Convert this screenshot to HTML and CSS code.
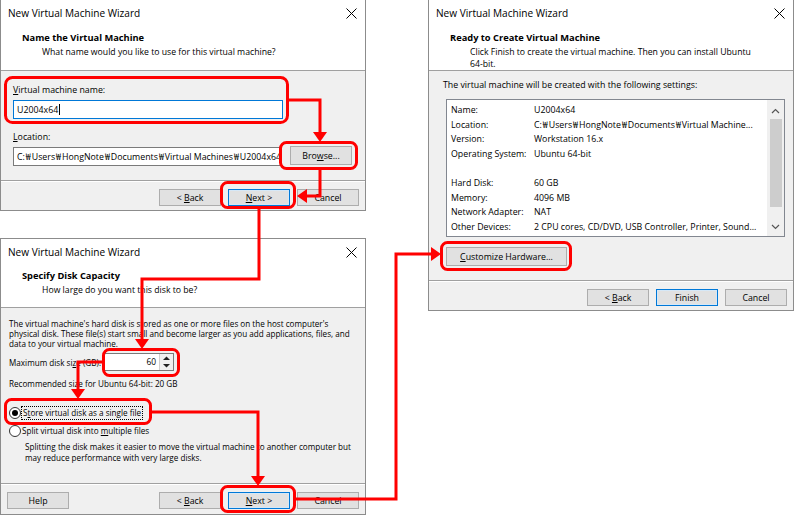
FILE: index.html
```html
<!DOCTYPE html>
<html lang="en">
<head>
    <meta charset="UTF-8">
    <title>New Virtual Machine Wizard</title>
    <link rel="stylesheet" href="styles.css">
</head>
<body>
    <div class="desk">
        <!-- step 1: name -->
        <div class="win win-name">
            <div class="titlebar">
                <span>New Virtual Machine Wizard</span>
                <svg class="close" width="11" height="11" viewBox="0 0 11 11"><path d="M0.5 0.5L10.5 10.5M10.5 0.5L0.5 10.5" stroke="#000" stroke-width="1"/></svg>
            </div>
            <div class="head">
                <div class="head-title">Name the Virtual Machine</div>
                <div class="head-sub">What name would you like to use for this virtual machine?</div>
            </div>
            <div class="body body-name">
                <div class="label"><u>V</u>irtual machine name:</div>
                <div class="field focused">U2004x64<span class="caret"></span></div>
                <div class="label label-loc"><u>L</u>ocation:</div>
                <div class="loc-row">
                    <div class="field">C:<span class="won">₩</span>Users<span class="won">₩</span>HongNote<span class="won">₩</span>Documents<span class="won">₩</span>Virtual Machines<span class="won">₩</span>U2004x64</div>
                    <div class="btn browse">Bro<u>w</u>se...</div>
                </div>
            </div>
            <div class="foot">
                <div class="btn"><span>&lt; <u>B</u>ack</span></div>
                <div class="btn default"><span><u>N</u>ext &gt;</span></div>
                <div class="btn">Cancel</div>
            </div>
        </div>

        <!-- step 2: disk -->
        <div class="win win-disk">
            <div class="titlebar">
                <span>New Virtual Machine Wizard</span>
                <svg class="close" width="11" height="11" viewBox="0 0 11 11"><path d="M0.5 0.5L10.5 10.5M10.5 0.5L0.5 10.5" stroke="#000" stroke-width="1"/></svg>
            </div>
            <div class="head head-short">
                <div class="head-title">Specify Disk Capacity</div>
                <div class="head-sub">How large do you want this disk to be?</div>
            </div>
            <div class="body body-disk">
                <p class="note">The virtual machine's hard disk is stored as one or more files on the host computer's<br>physical disk. These file(s) start small and become larger as you add applications, files, and<br>data to your virtual machine.</p>
                <div class="size-row">
                    <span>Maximum disk si<u>z</u>e (GB):</span>
                    <div class="spin">
                        <div class="spin-val">60</div>
                        <div class="spin-btns">
                            <svg width="9" height="6" viewBox="0 0 9 6"><path d="M1 5L4.5 1.5L8 5Z" fill="#222"/></svg>
                            <svg width="9" height="6" viewBox="0 0 9 6"><path d="M1 1L4.5 4.5L8 1Z" fill="#222"/></svg>
                        </div>
                    </div>
                </div>
                <div class="rec">Recommended size for Ubuntu 64-bit: 20 GB</div>
                <div class="radio-row">
                    <span class="radio on"></span>
                    <span class="focus-txt">S<u>t</u>ore virtual disk as a single file</span>
                </div>
                <div class="radio-row radio-two">
                    <span class="radio"></span>
                    <span>Split virtual disk into <u>m</u>ultiple files</span>
                </div>
                <p class="split-note">Splitting the disk makes it easier to move the virtual machine to another computer but<br>may reduce performance with very large disks.</p>
            </div>
            <div class="foot foot-help">
                <div class="btn help">Help</div>
                <div class="btn"><span>&lt; <u>B</u>ack</span></div>
                <div class="btn default"><span><u>N</u>ext &gt;</span></div>
                <div class="btn">Cancel</div>
            </div>
        </div>

        <!-- step 3: ready -->
        <div class="win win-ready">
            <div class="titlebar">
                <span>New Virtual Machine Wizard</span>
                <svg class="close" width="11" height="11" viewBox="0 0 11 11"><path d="M0.5 0.5L10.5 10.5M10.5 0.5L0.5 10.5" stroke="#000" stroke-width="1"/></svg>
            </div>
            <div class="head head-ready">
                <div class="head-title">Ready to Create Virtual Machine</div>
                <div class="head-sub">Click Finish to create the virtual machine. Then you can install Ubuntu<br>64-bit.</div>
            </div>
            <div class="body body-ready">
                <div class="intro">The virtual machine will be created with the following settings:</div>
                <div class="list">
                    <div class="rows">
                        <div class="row"><span class="key">Name:</span><span>U2004x64</span></div>
                        <div class="row"><span class="key">Location:</span><span>C:<span class="won">₩</span>Users<span class="won">₩</span>HongNote<span class="won">₩</span>Documents<span class="won">₩</span>Virtual Machine...</span></div>
                        <div class="row"><span class="key">Version:</span><span>Workstation 16.x</span></div>
                        <div class="row"><span class="key">Operating System:</span><span>Ubuntu 64-bit</span></div>
                        <div class="row"></div>
                        <div class="row"><span class="key">Hard Disk:</span><span>60 GB</span></div>
                        <div class="row"><span class="key">Memory:</span><span>4096 MB</span></div>
                        <div class="row"><span class="key">Network Adapter:</span><span>NAT</span></div>
                        <div class="row"><span class="key">Other Devices:</span><span>2 CPU cores, CD/DVD, USB Controller, Printer, Sound...</span></div>
                    </div>
                    <div class="scroll">
                        <svg width="9" height="6" viewBox="0 0 9 6"><path d="M1 5L4.5 1.5L8 5" fill="none" stroke="#555" stroke-width="1.2"/></svg>
                        <div class="thumb"></div>
                        <svg width="9" height="6" viewBox="0 0 9 6"><path d="M1 1L4.5 4.5L8 1" fill="none" stroke="#555" stroke-width="1.2"/></svg>
                    </div>
                </div>
                <div class="btn custom"><span><u>C</u>ustomize Hardware...</span></div>
            </div>
            <div class="foot">
                <div class="btn"><span>&lt; <u>B</u>ack</span></div>
                <div class="btn default">Finish</div>
                <div class="btn">Cancel</div>
            </div>
        </div>

        <!-- red call-outs -->
        <svg class="marks" width="794" height="515" viewBox="0 0 794 515">
            <g fill="none" stroke="#ff0000" stroke-width="3">
                <rect x="5.5" y="77.5" width="282" height="45" rx="7"/>
                <rect x="280.5" y="142.5" width="76" height="26" rx="6"/>
                <rect x="221.5" y="182.5" width="73" height="25" rx="6"/>
                <rect x="103.5" y="349.5" width="75" height="26" rx="6"/>
                <rect x="5.5" y="399.5" width="145" height="24" rx="6"/>
                <rect x="221.5" y="486.5" width="73" height="25" rx="6"/>
                <rect x="441.5" y="242.5" width="129" height="27" rx="6"/>
                <polyline points="289,100 320,100 320,133"/>
                <polyline points="320,170 320,196 306,196"/>
                <polyline points="259,209 259,279 142,279 142,340"/>
                <polyline points="102,362 78,362 78,390"/>
                <polyline points="152,412 258,412 258,477"/>
                <polyline points="296,499 396,499 396,254 432,254"/>
            </g>
            <g fill="#ff0000">
                <polygon points="313,132 327,132 320,142"/>
                <polygon points="307,189 307,203 297,196"/>
                <polygon points="135,339 149,339 142,349"/>
                <polygon points="71,389 85,389 78,399"/>
                <polygon points="251,476 265,476 258,486"/>
                <polygon points="431,247 431,261 441,254"/>
            </g>
        </svg>
    </div>
</body>
</html>
```

FILE: styles.css
```css
body {
    margin: 0;
    background: #fff;
}
.desk {
    position: relative;
    width: 794px;
    height: 515px;
    overflow: hidden;
    font-family: "Open Sans", "Noto Sans", sans-serif;
    color: #000;
}
.won {
    font-family: "Noto Sans CJK KR", sans-serif;
    padding: 0 1px;
}
.win {
    position: absolute;
    box-sizing: border-box;
    display: flex;
    flex-direction: column;
    width: 366px;
    border: 1px solid #8c8c8c;
    background: #f0f0f0;
}
.win-name {
    left: 0;
    top: -1px;
    height: 212px;
}
.win-disk {
    left: 0;
    top: 238px;
    height: 277px;
}
.win-ready {
    left: 428px;
    top: -1px;
    height: 312px;
}
.titlebar {
    height: 26px;
    flex: none;
    background: #fff;
    display: flex;
    align-items: center;
    justify-content: space-between;
    padding: 0 8px 0 7px;
    font-size: 10.1px;
}
.close {
    display: block;
}
.head {
    flex: none;
    background: #fff;
    border-bottom: 1px solid #a0a0a0;
    padding: 5px 0 0 21px;
    box-sizing: border-box;
    height: 45px;
}
.head-short {
    height: 43px;
    padding-top: 4px;
}
.head-title {
    font-weight: bold;
    font-size: 9.3px;
    line-height: 14px;
}
.head-sub {
    font-size: 8.7px;
    line-height: 14px;
    padding-left: 20px;
}
.head-ready .head-sub {
    line-height: 12px;
    padding-top: 1px;
}
.body {
    flex: 1;
    font-size: 8.8px;
}
.foot {
    flex: none;
    height: 30px;
    box-sizing: border-box;
    border-top: 1px solid #a0a0a0;
    box-shadow: inset 0 1px 0 #fff;
    display: flex;
    justify-content: flex-end;
    align-items: flex-start;
    gap: 7px;
    padding: 8px 6px 0 0;
}
.foot-help {
    height: 31px;
}
.foot-help .help {
    margin-right: auto;
    margin-left: 6px;
}
.btn {
    box-sizing: border-box;
    width: 62px;
    height: 17px;
    background: #e1e1e1;
    border: 1px solid #adadad;
    display: flex;
    align-items: center;
    justify-content: center;
    font-size: 8.8px;
}
.btn.default {
    border-color: #0078d7;
    box-shadow: inset 0 0 0 1px #d6e8f7;
}

/* step 1 */
.body-name {
    padding: 12px 0 0 12px;
}
.label {
    line-height: 14px;
}
.label-loc {
    margin-top: 11px;
}
.field {
    box-sizing: border-box;
    width: 270px;
    height: 19px;
    margin-top: 3px;
    background: #fff;
    border: 1px solid #7a7a7a;
    padding-left: 3px;
    display: flex;
    align-items: center;
    white-space: nowrap;
    overflow: hidden;
}
.field.focused {
    border-color: #0078d7;
}
.caret {
    display: inline-block;
    width: 1px;
    height: 11px;
    background: #000;
    margin-left: 1px;
}
.loc-row {
    display: flex;
    align-items: flex-start;
    gap: 8px;
}
.loc-row .field {
    width: 269px;
}
.browse {
    height: 19px;
    margin-top: 2px;
}

/* step 2 */
.body-disk {
    padding: 11px 0 0 8px;
    font-size: 8.15px;
}
.note, .split-note {
    margin: 0;
    line-height: 10px;
    white-space: nowrap;
}
.size-row {
    display: flex;
    align-items: center;
    gap: 3px;
    margin-top: 4px;
}
.spin {
    box-sizing: border-box;
    width: 70px;
    height: 18px;
    background: #fff;
    border: 1px solid #7a7a7a;
    display: flex;
}
.spin-val {
    flex: 1;
    text-align: right;
    padding-right: 3px;
    line-height: 16px;
    font-size: 8.4px;
}
.spin-btns {
    width: 13px;
    background: #f0f0f0;
    border-left: 1px solid #cfcfcf;
    display: flex;
    flex-direction: column;
    align-items: center;
    justify-content: space-around;
}
.spin-btns svg {
    display: block;
}
.rec {
    margin-top: 7px;
    line-height: 12px;
}
.radio-row {
    display: flex;
    align-items: center;
    gap: 1px;
    margin-top: 17px;
    line-height: 12px;
}
.radio-two {
    margin-top: 6px;
}
.radio {
    box-sizing: border-box;
    width: 12px;
    height: 12px;
    border: 1px solid #333;
    border-radius: 50%;
    background: #fff;
    display: flex;
    align-items: center;
    justify-content: center;
}
.radio.on::after {
    content: "";
    width: 6px;
    height: 6px;
    border-radius: 50%;
    background: #000;
}
.focus-txt {
    outline: 1px dotted #000;
    padding: 0 1px;
}
.split-note {
    margin-top: 4px;
    padding-left: 16px;
    line-height: 11px;
}

/* step 3 */
.body-ready {
    padding: 8px 0 0 14px;
}
.intro {
    line-height: 12px;
}
.list {
    box-sizing: border-box;
    width: 339px;
    height: 138px;
    margin: 8px 0 0 3px;
    background: #fff;
    border: 1px solid #828790;
    display: flex;
}
.rows {
    flex: 1;
    padding: 3px 0 0 4px;
}
.row {
    height: 14.6px;
    line-height: 14.6px;
    display: flex;
    white-space: nowrap;
}
.key {
    width: 83px;
    flex: none;
}
.scroll {
    width: 17px;
    background: #f0f0f0;
    display: flex;
    flex-direction: column;
    align-items: center;
    padding: 8px 0 6px;
    box-sizing: border-box;
}
.thumb {
    width: 12px;
    height: 88px;
    background: #cdcdcd;
    margin: 5px 0 auto;
}
.custom {
    width: 121px;
    height: 19px;
    margin: 10px 0 0 3px;
}

.marks {
    position: absolute;
    left: 0;
    top: 0;
}
```
